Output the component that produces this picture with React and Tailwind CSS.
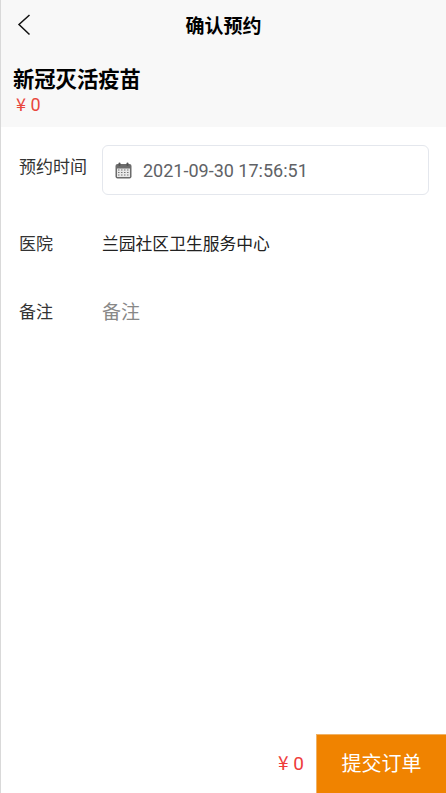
const cjk = "font-['Roboto','Noto_Sans_CJK_SC',sans-serif]";
const yen = "font-['Noto_Sans_CJK_SC',sans-serif]";

function Calendar() {
  return (
    <svg width="17" height="17" viewBox="0 0 17 17" className="shrink-0">
      <rect x="0.5" y="2" width="16" height="14.5" rx="2" fill="#6b6b6b" />
      <rect x="2" y="6.5" width="13" height="8.5" fill="#e8e8e8" />
      <rect x="3.5" y="0.5" width="2" height="3.5" rx="1" fill="#555" />
      <rect x="11.5" y="0.5" width="2" height="3.5" rx="1" fill="#555" />
      <path d="M3 8h1.5M6 8h1.5M9 8h1.5M12 8h1.5M3 10.5h1.5M6 10.5h1.5M9 10.5h1.5M12 10.5h1.5M3 13h1.5M6 13h1.5M9 13h1.5M12 13h1.5" stroke="#777" strokeWidth="1" />
    </svg>
  );
}

export default function App() {
  return (
    <div className={`${cjk} h-[793px] w-[446px] flex flex-col border-l border-[#d9d9d9] bg-white overflow-hidden`}>
      <header className="h-[52px] shrink-0 bg-[#f8f8f8] flex items-center relative">
        <svg width="14" height="22" viewBox="0 0 14 22" className="absolute left-[16px] top-[14px]">
          <path d="M12.5 1 L2 10.5 L12.5 20.5" fill="none" stroke="#111" strokeWidth="1.5" />
        </svg>
        <h1 className="w-full text-center text-[19px] font-bold text-black pt-[2px]">确认预约</h1>
      </header>
      <section className="h-[75px] shrink-0 bg-[#f8f8f8] pl-[12px] pt-[14px]">
        <h2 className="text-[21.3px] leading-[28px] font-bold text-black">新冠灭活疫苗</h2>
        <p className="text-[18px] leading-[22px] text-[#e8463c] pl-[3px] -mt-[2px]"><span className={yen}>¥</span> 0</p>
      </section>
      <div className="flex items-center pl-[18px] pr-[17px] pt-[18px]">
        <span className="w-[83px] shrink-0 text-[17px] text-[#333] -mt-[4px]">预约时间</span>
        <div className="flex-1 h-[50px] border border-[#e4e7ed] rounded-[6px] flex items-center pl-[12px] gap-[11px]">
          <Calendar />
          <span className="text-[18px] text-[#606266]">2021-09-30 17:56:51</span>
        </div>
      </div>
      <div className="flex items-center pl-[18px] mt-[38px] h-[24px]">
        <span className="w-[83px] shrink-0 text-[17px] text-[#333]">医院</span>
        <span className="text-[16.8px] text-[#222]">兰园社区卫生服务中心</span>
      </div>
      <div className="flex items-center pl-[18px] mt-[44px] h-[24px]">
        <span className="w-[83px] shrink-0 text-[17px] text-[#333]">备注</span>
        <span className="text-[19px] text-[#888]">备注</span>
      </div>
      <footer className="mt-auto flex items-center justify-end h-[59px]">
        <span className="text-[19px] text-[#ee3b3b] mr-[12px]"><span className={yen}>¥</span> 0</span>
        <button className="w-[130px] h-[59px] bg-[#f08300] border border-[#f0b265] border-b-0 border-r-0 text-white text-[20px]">提交订单</button>
      </footer>
    </div>
  );
}
